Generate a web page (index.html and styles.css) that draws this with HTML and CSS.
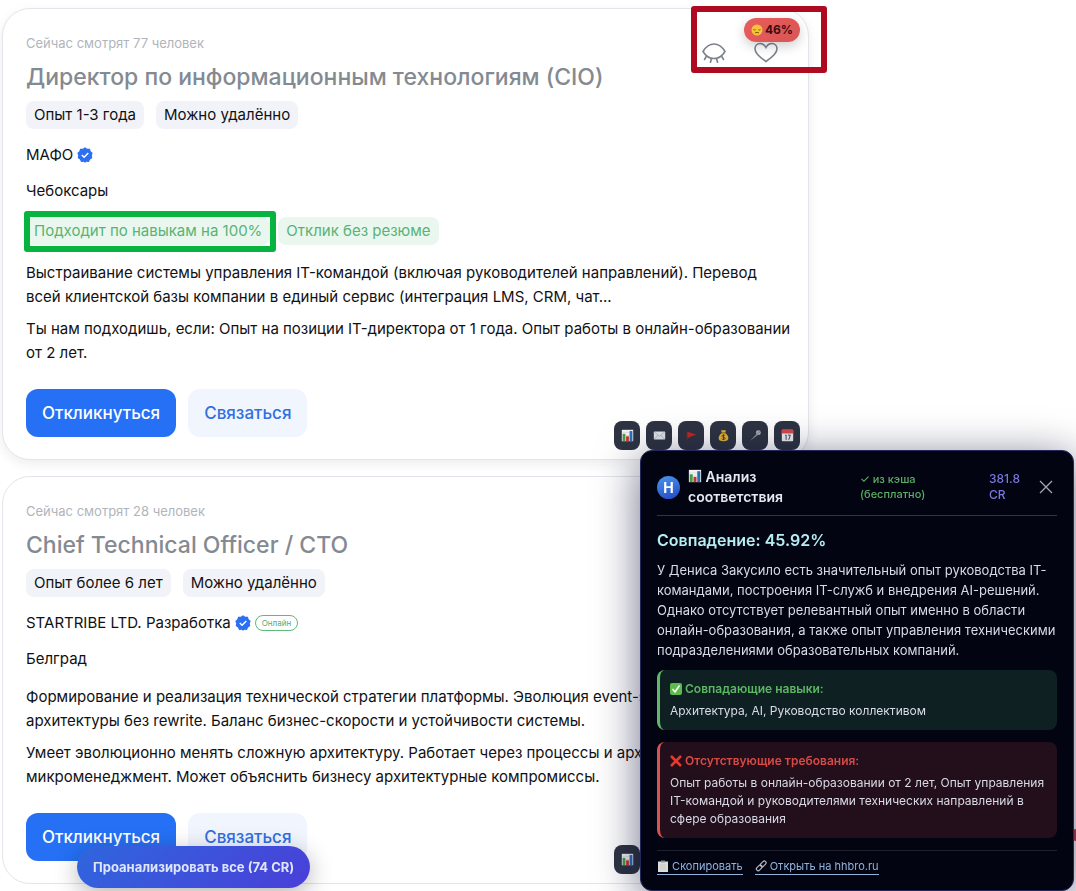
FILE: index.html
```html
<!DOCTYPE html>
<html lang="ru">
<head>
    <meta charset="UTF-8">
    <meta name="viewport" content="width=device-width, initial-scale=1.0">
    <title>Вакансии</title>
    <link rel="stylesheet" href="styles.css">
</head>
<body>
    <svg class="sprite" aria-hidden="true">
        <symbol id="chart" viewBox="0 0 16 16">
            <rect x="1" y="1" width="14" height="14" fill="#f1f3f5"/>
            <path d="M1 4.5h14M1 8h14M1 11.5h14" stroke="#c5cbd1" stroke-width=".6"/>
            <rect x="2" y="6" width="3.4" height="9" fill="#4c9a48"/>
            <rect x="6.3" y="9" width="3.4" height="6" fill="#c8322f"/>
            <rect x="10.6" y="2.5" width="3.4" height="12.5" fill="#2d6fb5"/>
        </symbol>
        <symbol id="mail" viewBox="0 0 16 16">
            <rect x="1" y="3" width="14" height="10" rx="1" fill="#e3e6ea"/>
            <path d="M1.5 12.5 6.2 8M14.5 12.5 9.8 8M1.5 3.5 8 9l6.5-5.5" fill="none" stroke="#9aa1a9" stroke-width=".8"/>
        </symbol>
        <symbol id="flag" viewBox="0 0 16 16">
            <path d="M2.5 3v11" stroke="#7c2a2c" stroke-width="1"/>
            <path d="M3 3.5 14 7 9 8.500 3 11.5z" fill="#c9252a"/>
        </symbol>
        <symbol id="money" viewBox="0 0 16 16">
            <path d="M5 1.5h6L10 5c3 2 4 4.5 4 6.5C14 14 12 15 8 15s-6-1-6-3.5C2 9.5 3 7 6 5z" fill="#e3b53a"/>
            <path d="M5.5 4.8h5" stroke="#8a5b17" stroke-width="1.2"/>
            <path d="M10 8.2C9 7 6 7.200 6.200 8.900c.2 1.600 3.700.8 3.800 2.600.1 1.700-3 1.900-4.200.5M8 6.500v7" fill="none" stroke="#5c3c0c" stroke-width="1.1"/>
        </symbol>
        <symbol id="mic" viewBox="0 0 16 16">
            <path d="M1.500 14.500 9 6l1.600 1.600z" fill="#8b9097"/>
            <circle cx="11.5" cy="4.5" r="3" fill="#b9bec5"/>
            <path d="m9 3.500 3.500 3.500M10.500 2l3.500 3.500M13.500 3l-4 3.500" stroke="#5f656d" stroke-width=".6"/>
        </symbol>
        <symbol id="calendar" viewBox="0 0 16 16">
            <rect x="1" y="1" width="14" height="14" rx="1" fill="#eef0f2"/>
            <path d="M1 2a1 1 0 0 1 1-1h12a1 1 0 0 1 1 1v3.500H1z" fill="#d8484d"/>
            <path d="m5 8 1.300-.7v6M8.500 7.500h3L9.500 13.300" fill="none" stroke="#42474e" stroke-width="1.2"/>
        </symbol>
        <symbol id="verified" viewBox="0 0 16 16">
            <path d="M8 .3 10.200 1.800 12.900 1.700 13.700 4.200 15.700 6 14.800 8.500 15.300 11.100 13.100 12.500 11.900 14.900 9.300 14.700 8 15.700 6.700 14.700 4.100 14.900 2.900 12.500.7 11.100 1.200 8.500.3 6 2.300 4.200 3.100 1.700 5.800 1.800z" fill="#2b6ff2"/>
            <path d="m4.800 8 2.300 2.200 4.200-4.200" fill="none" stroke="#fff" stroke-width="1.5"/>
        </symbol>
    </svg>

    <main class="feed">
        <article class="card card-active">
            <header class="card-head">
                <div>
                    <p class="viewers">Сейчас смотрят 77 человек</p>
                    <h2 class="title">Директор по информационным технологиям (CIO)</h2>
                </div>
                <div class="card-actions">
                    <button class="icon-btn" aria-label="Скрыть">
                        <svg width="26" height="24" viewBox="0 0 26 24"><path d="M2 10.5C5 5.500 8.500 3 13 3s8 2.500 11 7.500c-3 5-6.500 7-11 7s-8-2-11-7zM5.500 15l-2 3.500M10.500 17.300l-1 4M15.500 17.300l1 4M20.500 15l2 3.500"/></svg>
                    </button>
                    <button class="icon-btn" aria-label="В избранное">
                        <svg width="26" height="24" viewBox="0 0 26 24"><path d="M13 20.500C7 16.500 2 12.500 2 7.800 2 4.800 4.200 2.500 7 2.500c2.500 0 4.700 1.300 6 4 1.300-2.700 3.500-4 6-4 2.800 0 5 2.300 5 5.300 0 4.700-5 8.700-11 12.700z"/></svg>
                    </button>
                    <span class="score">
                        <svg width="12" height="12" viewBox="0 0 12 12"><circle cx="6" cy="6" r="5.5" fill="#f7c437"/><path d="M2.500 5.500q1 1 2 .2M7.500 5.700q1 .8 2-.2M4 9q2-1.500 4 0" fill="none" stroke="#70430f" stroke-width=".9"/></svg>
                        46%
                    </span>
                    <span class="mark mark-red"></span>
                </div>
            </header>
            <div class="tags">
                <span class="tag">Опыт 1-3 года</span>
                <span class="tag">Можно удалённо</span>
            </div>
            <div class="company">МАФО <svg width="16" height="16"><use href="#verified"/></svg></div>
            <p class="city">Чебоксары</p>
            <div class="tags tags-green">
                <span class="tag tag-green">Подходит по навыкам на 100%<span class="mark mark-green"></span></span>
                <span class="tag tag-green">Отклик без резюме</span>
            </div>
            <div class="description">
                <p>Выстраивание системы управления IT-командой (включая руководителей направлений). Перевод<br>всей клиентской базы компании в единый сервис (интеграция LMS, CRM, чат...</p>
                <p>Ты нам подходишь, если: Опыт на позиции IT-директора от 1 года. Опыт работы в онлайн-образовании<br>от 2 лет.</p>
            </div>
            <div class="buttons">
                <button class="btn btn-primary">Откликнуться</button>
                <button class="btn btn-light">Связаться</button>
            </div>
            <div class="tools">
                <button class="tool" aria-label="Анализ"><svg width="13" height="13"><use href="#chart"/></svg></button>
                <button class="tool" aria-label="Письмо"><svg width="13" height="13"><use href="#mail"/></svg></button>
                <button class="tool" aria-label="Флаг"><svg width="13" height="13"><use href="#flag"/></svg></button>
                <button class="tool" aria-label="Зарплата"><svg width="13" height="13"><use href="#money"/></svg></button>
                <button class="tool" aria-label="Интервью"><svg width="13" height="13"><use href="#mic"/></svg></button>
                <button class="tool" aria-label="Календарь"><svg width="13" height="13"><use href="#calendar"/></svg></button>
            </div>
        </article>

        <article class="card">
            <header class="card-head">
                <div>
                    <p class="viewers">Сейчас смотрят 28 человек</p>
                    <h2 class="title">Chief Technical Officer / CTO</h2>
                </div>
            </header>
            <div class="tags">
                <span class="tag">Опыт более 6 лет</span>
                <span class="tag">Можно удалённо</span>
            </div>
            <div class="company">STARTRIBE LTD. Разработка <svg width="16" height="16"><use href="#verified"/></svg> <span class="online">Онлайн</span></div>
            <p class="city">Белград</p>
            <div class="description">
                <p>Формирование и реализация технической стратегии платформы. Эволюция event-sourcing<br>архитектуры без rewrite. Баланс бизнес-скорости и устойчивости системы.</p>
                <p>Умеет эволюционно менять сложную архитектуру. Работает через процессы и архитектуру<br>микроменеджмент. Может объяснить бизнесу архитектурные компромиссы.</p>
            </div>
            <div class="buttons">
                <button class="btn btn-primary">Откликнуться</button>
                <button class="btn btn-light">Связаться</button>
            </div>
            <div class="tools tools-single">
                <button class="tool" aria-label="Анализ"><svg width="13" height="13"><use href="#chart"/></svg></button>
            </div>
        </article>
    </main>

    <button class="analyze-all">Проанализировать все (74 CR)</button>
    <span class="side-dot"></span>

    <aside class="panel">
        <header class="panel-head">
            <span class="logo">H</span>
            <h3 class="panel-title"><svg width="14" height="14"><use href="#chart"/></svg> Анализ соответствия</h3>
            <span class="cache">✓ из кэша (бесплатно)</span>
            <span class="balance">381.8 CR</span>
            <button class="close" aria-label="Закрыть"><svg width="14" height="14" viewBox="0 0 14 14"><path d="M1 1l12 12M13 1 1 13"/></svg></button>
        </header>
        <h4 class="match">Совпадение: 45.92%</h4>
        <p class="summary">У Дениса Закусило есть значительный опыт руководства IT-командами, построения IT-служб и внедрения AI-решений. Однако отсутствует релевантный опыт именно в области онлайн-образования, а также опыт управления техническими подразделениями образовательных компаний.</p>
        <section class="note note-good">
            <h5><svg width="12" height="12" viewBox="0 0 12 12"><rect width="12" height="12" rx="2" fill="#5dba4c"/><path d="m2.500 6 2.500 3 4.500-6.500" fill="none" stroke="#fff" stroke-width="1.5"/></svg> Совпадающие навыки:</h5>
            <p>Архитектура, AI, Руководство коллективом</p>
        </section>
        <section class="note note-bad">
            <h5><svg width="12" height="12" viewBox="0 0 12 12"><path d="m1 1 10 10M11 1 1 11" stroke="#e8392c" stroke-width="2.5"/></svg> Отсутствующие требования:</h5>
            <p>Опыт работы в онлайн-образовании от 2 лет, Опыт управления IT-командой и руководителями технических направлений в сфере образования</p>
        </section>
        <footer class="panel-foot">
            <a href="#"><svg width="12" height="12" viewBox="0 0 12 12"><path d="M1 1.500h10V12H1z" fill="#dcdcd8"/><path d="M4 .5h4v2H4z" fill="#8f9296"/><path d="M3 5h6M3 7h6M3 9h6" stroke="#b9b9b5" stroke-width=".6"/></svg> Скопировать</a>
            <a href="#"><svg width="12" height="12" viewBox="0 0 12 12"><g fill="none" stroke="#b4bac4" stroke-width="1.2"><rect x="-3" y="-1.7" width="6.5" height="3.6" rx="1.8" transform="translate(4 8) rotate(-45)"/><rect x="-3" y="-1.7" width="6.5" height="3.6" rx="1.8" transform="translate(8 4) rotate(-45)"/></g></svg> Открыть на hhbro.ru</a>
        </footer>
    </aside>
</body>
</html>
```

FILE: styles.css
```css
* {
    box-sizing: border-box;
}
body {
    margin: 0;
    background: #fff;
    font-family: Inter, "Liberation Sans", sans-serif;
    font-size: 15px;
    line-height: 24px;
    color: #101114;
}
h2, h3, h4, h5, p {
    margin: 0;
}
button {
    border: 0;
    font-family: inherit;
    cursor: pointer;
}
.sprite {
    position: absolute;
    width: 0;
    height: 0;
}

/* vacancy cards */
.feed {
    display: flex;
    flex-direction: column;
    gap: 16px;
    width: 75%;
    margin-left: 2px;
    padding-top: 8px;
}
.card {
    position: relative;
    padding: 24px 22px 22px 23px;
    border: 1px solid #e2e5e9;
    border-radius: 28px;
    background: #fff;
}
.card-active {
    box-shadow: 0 4px 12px rgba(20, 30, 50, 0.08);
}
.card-head {
    display: flex;
    justify-content: space-between;
    align-items: flex-start;
    margin-bottom: 10px;
}
.viewers {
    margin-bottom: 10px;
    font-size: 13px;
    line-height: 20px;
    color: #b1b5bb;
}
.title {
    font-size: 23px;
    font-weight: 500;
    line-height: 28px;
    color: #848a92;
}
.card-actions {
    position: relative;
    display: flex;
    gap: 12px;
}
.icon-btn {
    width: 40px;
    height: 42px;
    padding: 0;
    background: none;
}
.icon-btn path {
    fill: none;
    stroke: #7d838a;
    stroke-width: 1.6;
    stroke-linecap: round;
}
.score {
    position: absolute;
    top: -15px;
    right: -14px;
    display: flex;
    align-items: center;
    gap: 2px;
    height: 24px;
    padding: 0 7px;
    border-radius: 12px;
    background: linear-gradient(135deg, #e85c5c, #d95555);
    box-shadow: 0 4px 12px rgba(0, 0, 0, 0.2);
    font-size: 12px;
    font-weight: 700;
    color: #3a0b10;
}
.mark {
    position: absolute;
    border-radius: 3px;
}
.mark-red {
    inset: -27px -41px 2px -3px;
    border: 6px solid #ae0a20;
}
.mark-green {
    inset: -6px -6px -7px -2px;
    border: 6px solid #08b440;
}
.tags {
    display: flex;
    gap: 12px;
}
.tag {
    position: relative;
    padding: 0 8px;
    border-radius: 8px;
    background: #f2f3f8;
    line-height: 28px;
}
.tags-green {
    gap: 8px;
    margin-bottom: 16px;
}
.tag-green {
    background: #eaf7ee;
    color: #58b377;
}
.company {
    display: flex;
    align-items: center;
    gap: 4px;
    margin-top: 14px;
}
.online {
    padding: 0 6px;
    border: 1px solid #5fb87c;
    border-radius: 8px;
    font-size: 8px;
    line-height: 14px;
    color: #4fae6f;
}
.city {
    margin: 12px 0 14px;
}
.description {
    display: flex;
    flex-direction: column;
    gap: 8px;
    white-space: nowrap;
}
.buttons {
    display: flex;
    gap: 12px;
    margin-top: 24px;
}
.btn {
    height: 48px;
    padding: 0 16px;
    border-radius: 12px;
    font-size: 17px;
    font-weight: 500;
}
.btn-primary {
    background: #2570f5;
    color: #fff;
}
.btn-light {
    background: #f0f5fe;
    color: #326fe0;
}
.tools {
    position: absolute;
    right: 8px;
    bottom: 9px;
    display: flex;
    gap: 6px;
}
.tools-single {
    right: 168px;
}
.tool {
    display: flex;
    align-items: center;
    justify-content: center;
    width: 26px;
    height: 29px;
    padding: 0;
    border-radius: 8px;
    background: #2e3442;
}

/* floating controls */
.analyze-all {
    position: fixed;
    left: 77px;
    bottom: 3px;
    height: 42px;
    padding: 0 16px;
    border-radius: 21px;
    background: linear-gradient(135deg, #2f66dd, #4a3fd8);
    box-shadow: 0 6px 24px rgba(0, 0, 0, 0.3);
    font-size: 13px;
    font-weight: 700;
    color: #dfe5fb;
}
.side-dot {
    position: fixed;
    right: -6px;
    bottom: 50px;
    width: 12px;
    height: 12px;
    border-radius: 50%;
    background: #b5424d;
}

/* analysis panel */
.panel {
    position: fixed;
    right: 2px;
    bottom: 0;
    width: 434px;
    padding: 16px 16px 15px;
    border: 1px solid #26285c;
    border-radius: 12px;
    background: #020412;
    box-shadow: 0 8px 44px rgba(10, 14, 50, 0.6);
    color: #d8dbe6;
}
.panel-head {
    display: grid;
    grid-template-columns: 24px 1fr 129px 46px 22px;
    align-items: center;
    padding-bottom: 8px;
    border-bottom: 1px solid #34363f;
}
.logo {
    width: 23px;
    height: 23px;
    border-radius: 50%;
    background: linear-gradient(160deg, #4b98ee, #2346c4);
    font-size: 14px;
    font-weight: 700;
    line-height: 23px;
    text-align: center;
    color: #fff;
}
.panel-title {
    width: 120px;
    margin-left: 7px;
    font-size: 14px;
    font-weight: 600;
    line-height: 20px;
    color: #e6e8f0;
}
.panel-title svg {
    vertical-align: -1px;
}
.cache {
    width: 70px;
    font-size: 11px;
    font-weight: 500;
    line-height: 15px;
    color: #5cae64;
}
.balance {
    width: 36px;
    font-size: 12px;
    font-weight: 500;
    line-height: 16px;
    color: #7a78dc;
}
.close {
    padding: 0;
    background: none;
    line-height: 0;
}
.close path {
    fill: none;
    stroke: #a3a7b3;
    stroke-width: 1.3;
}
.match {
    margin: 12px 0 8px;
    font-size: 16px;
    font-weight: 600;
    line-height: 24px;
    color: #b5eef2;
}
.summary {
    margin-bottom: 10px;
    font-size: 13px;
    line-height: 20px;
}
.note {
    margin-bottom: 12px;
    padding: 10px;
    border-left: 3px solid;
    border-radius: 8px;
    font-size: 12px;
    line-height: 18px;
}
.note h5 {
    margin-bottom: 4px;
    font-size: 12px;
    font-weight: 600;
}
.note svg,
.panel-foot svg {
    vertical-align: -2px;
}
.note p {
    color: #d8dbe6;
}
.note-good {
    border-color: #62b768;
    background: #0f2022;
    color: #5cb763;
}
.note-bad {
    border-color: #d9534f;
    background: #220f1b;
    color: #d94a45;
}
.panel-foot {
    display: flex;
    gap: 12px;
    padding-top: 8px;
    border-top: 1px solid #1d1f2b;
    font-size: 11px;
    line-height: 15px;
}
.panel-foot a {
    border-bottom: 1px solid;
    color: #92b3dc;
    text-decoration: none;
}
```
